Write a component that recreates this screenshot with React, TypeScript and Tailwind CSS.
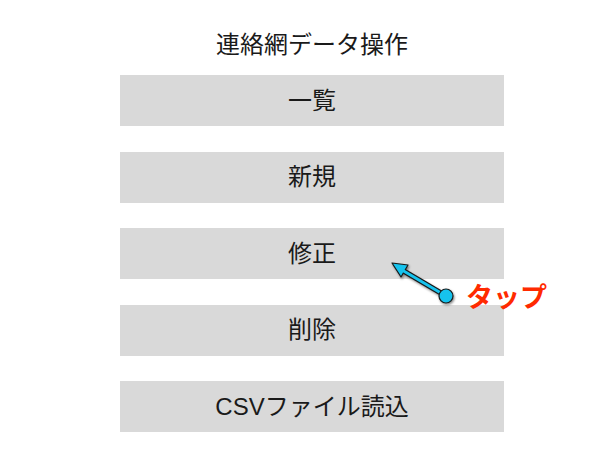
import React from "react";

const jp = { fontFamily: '"Liberation Sans", "Noto Sans CJK JP", "Noto Sans", sans-serif' };

const items = ["一覧", "新規", "修正", "削除", "CSVファイル読込"];

export default function App() {
  return (
    <div className="relative w-[600px] h-[462px] bg-white overflow-hidden" style={jp}>
      <div className="flex flex-col items-center pl-[24px]">
        <div className="pt-[30px] h-[60px] text-[24px] leading-[30px] text-[#1a1a1a]">連絡網データ操作</div>
        <div className="mt-[15px] flex flex-col gap-[25.5px]">
          {items.map((t) => (
            <div
              key={t}
              className="w-[384px] h-[51px] bg-[#d9d9d9] flex items-center justify-center text-[24px] text-[#1a1a1a]"
            >
              {t}
            </div>
          ))}
        </div>
      </div>
      <svg className="absolute left-[380px] top-[250px]" width="80" height="60" viewBox="0 0 80 60">
        <defs>
          <filter id="sh" x="-20%" y="-20%" width="140%" height="140%">
            <feDropShadow dx="1" dy="1.5" stdDeviation="1" floodColor="#000" floodOpacity="0.45" />
          </filter>
        </defs>
        <g filter="url(#sh)">
          <line x1="66" y1="46" x2="22" y2="20" stroke="#1a1a1a" strokeWidth="5.5" strokeLinecap="round" />
          <polygon points="12,13 28,15 21,27" fill="#18c3ee" stroke="#1a1a1a" strokeWidth="1.2" strokeLinejoin="round" />
          <line x1="66" y1="46" x2="22" y2="20" stroke="#18c3ee" strokeWidth="3" strokeLinecap="round" />
          <circle cx="66" cy="46" r="7" fill="#18c3ee" stroke="#1a1a1a" strokeWidth="1.2" />
        </g>
      </svg>
      <div className="absolute left-[466px] top-[280px] text-[27px] leading-[36px] font-bold text-[#ff2a00]">タップ</div>
    </div>
  );
}
